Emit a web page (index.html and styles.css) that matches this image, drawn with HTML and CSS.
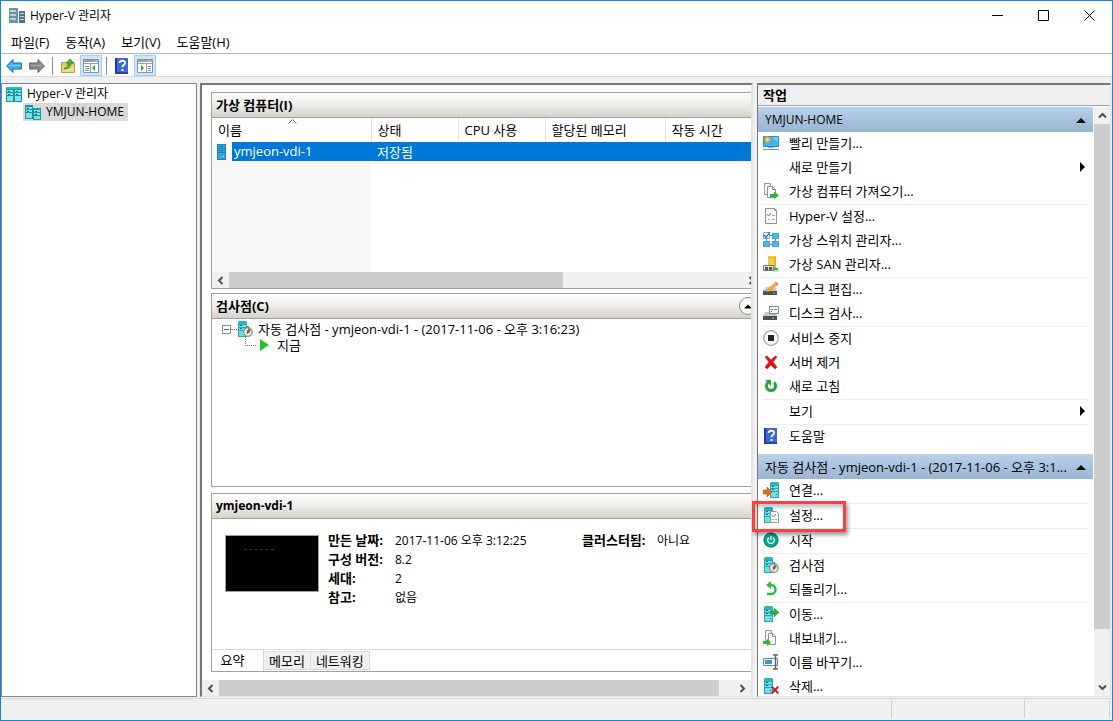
FILE: index.html
```html
<!DOCTYPE html>
<html lang="ko">
<head>
<meta charset="utf-8">
<title>Hyper-V 관리자</title>
<link rel="stylesheet" href="styles.css">
</head>
<body>
<svg class="defs" aria-hidden="true">
  <symbol id="server" viewBox="0 0 16 16">
    <path d="M1 1h9v15H1z" fill="#2aa6ae"/><path d="M1 1l1-1h7l1 1v2H1z" fill="#2bb4bc"/>
    <path d="M2 4h7v2H2zM2 7h7v2H2zM2 10h7v5H2z" fill="#6fdfe3"/>
    <path d="M3 4h2v1H3zM3 7h2v1H3zM7 12h1v1H7z" fill="#0b7780"/>
  </symbol>
  <symbol id="clock" viewBox="0 0 16 16">
    <use href="#server"/><path d="M9 5h3v2H9z" fill="#888"/><circle cx="11" cy="11" r="4.300" fill="#e6e6e6" stroke="#8b8b8b" stroke-width="1.200"/>
    <path d="M11 11V7a4 4 0 0 1 3 3z" fill="#2aa636"/><path d="M10 9l3 2-3 2z" fill="#b52720"/>
  </symbol>
  <symbol id="rack" viewBox="0 0 16 16">
    <path d="M0 1h16v15H0z" fill="#1a98a1"/><path d="M0 1h16v2H0z" fill="#29bcc4"/>
    <path d="M1 4h6v2H1zM1 7h6v2H1zM1 10h6v5H1zM9 4h6v2H9zM9 7h6v2H9zM9 10h6v5H9z" fill="#7ce6e6"/>
    <path d="M2 5h2v1H2zM2 8h2v1H2zM10 5h2v1h-2zM10 8h2v1h-2z" fill="#0b6a74"/>
  </symbol>
  <symbol id="host" viewBox="0 0 16 16">
    <path d="M0 1h8v14H0zM8 4h8v12H8z" fill="#1a98a1"/>
    <path d="M1 3h6v2H1zM1 6h6v2H1zM1 9h6v5H1zM9 6h6v2H9zM9 9h6v2H9zM9 12h6v3H9z" fill="#78e2e5"/>
    <path d="M2 4h2v1H2zM2 7h2v1H2zM10 7h2v1h-2zM10 10h2v1h-2z" fill="#0b6a74"/>
  </symbol>
  <symbol id="app" viewBox="0 0 16 16">
    <path d="M0 0h9v15H0z" fill="#6f9197"/><path d="M1 2h6v2H1zM1 6h6v2H1zM1 10h6v2H1z" fill="#b4d3d3"/>
    <path d="M10 3h6v12h-6z" fill="#4c7a83"/><path d="M11 5h4v1h-4zM11 8h4v1h-4zM11 11h4v1h-4z" fill="#b8dcda"/>
  </symbol>
  <symbol id="vm" viewBox="0 0 10 16"><path d="M0 0h9v16H0z" fill="#1b82b8"/><path d="M1 1h7v3H1zM1 5h7v3H1zM1 9h7v6H1z" fill="#35a9de"/><path d="M2 2h4v1H2zM2 6h4v1H2z" fill="#1672a5"/><path d="M6 12h1v1H6z" fill="#c9effc"/></symbol>
  <symbol id="left" viewBox="0 0 16 16"><path d="M.6 8L7 1.500v3.500h8.400v6H7v3.500z" fill="#43b1ef" stroke="#1767ae"/><path d="M3 7.500h11.500" stroke="#8bd5fa"/></symbol>
  <symbol id="right" viewBox="0 0 16 16"><path d="M15.400 8L9 1.500v3.500H.6v6H9v3.500z" fill="#8b8b8b" stroke="#656565"/><path d="M2 7.500h10" stroke="#aaa"/></symbol>
  <symbol id="folder" viewBox="0 0 16 16"><path d="M1.500 4.500h5l1 1h7v9h-13z" fill="#e3c36e" stroke="#c39c45"/><path d="M2 8h12v6H2z" fill="#f3da92"/><path d="M4 10c3 0 4-2 4-5H6l4-4 4 4h-3c0 4-2 6-7 6z" fill="#3ebd39" stroke="#238426" stroke-width=".6"/></symbol>
  <symbol id="paneL" viewBox="0 0 16 16"><path d="M.5 1.500h15v13H.5z" fill="#fff" stroke="#8b9297"/><path d="M1 2h14v2H1z" fill="#9aa0a4"/><path d="M1 5.500h14M7.500 6v8" stroke="#9ba1a5"/><path d="M2 8.500h4M2 10.500h4M2 12.500h4" stroke="#8b9297"/><path d="M12 7v6l-3-3z" fill="#2fa336"/><path d="M11 3h1M13 3h1" stroke="#fff"/></symbol>
  <symbol id="paneR" viewBox="0 0 16 16"><path d="M.5 1.500h15v13H.5z" fill="#fff" stroke="#8b9297"/><path d="M1 2h14v2H1z" fill="#9aa0a4"/><path d="M1 5.500h14M9.500 6v8" stroke="#9ba1a5"/><path d="M11 8.500h3M11 10.500h3M11 12.500h3" stroke="#6b94bb"/><path d="M4 7v6l3-3z" fill="#2fa336"/><path d="M11 3h1M13 3h1" stroke="#fff"/></symbol>
  <symbol id="help" viewBox="0 0 16 16"><path d="M1 0h13v16H1z" fill="#4167d4"/><path d="M1 0h2v16H1z" fill="#1e3d96"/><path d="M1 14h13v2H1z" fill="#2247a8"/><path d="M5.500 5c0-3 6-3 5.500 0 0 2-2.600 2-2.600 4.300" fill="none" stroke="#fff" stroke-width="1.800"/><path d="M7.500 11h2v2h-2z" fill="#fff"/></symbol>
  <symbol id="monitor" viewBox="0 0 16 16"><path d="M.5 1.500h15v10H.5z" fill="#42b4ee" stroke="#3489bd"/><path d="M9 2h6v5z" fill="#75cef8"/><path d="M5 12h6v1H5z" fill="#9dacb3"/><path d="M0 14.500h16" stroke="#7d929b"/><path d="M4.500 1v7M1 4.500h7M2 2l5 5M7 2L2 7" stroke="#ffad29" stroke-width="1.200"/><circle cx="4.500" cy="4.500" r="1.500" fill="#ffe17b"/></symbol>
  <symbol id="import" viewBox="0 0 16 16"><path d="M1.500.5h6v11h-6z" fill="#f5f5f5" stroke="#999"/><path d="M4.500 3.500h5l3 3v8h-8z" fill="#fff" stroke="#929292"/><path d="M9.500 3.500v3h3" fill="none" stroke="#929292"/><path d="M7 11h4V8.500l5 4-5 3.500v-2H7z" fill="#24b82f"/></symbol>
  <symbol id="export" viewBox="0 0 16 16"><path d="M2.500.5h6v10h-6z" fill="#f5f5f5" stroke="#999"/><path d="M5.500 3.500h4l3 3v8h-7z" fill="#fff" stroke="#929292"/><path d="M9.500 3.500v3h3" fill="none" stroke="#929292"/><path d="M0 11h4V8.500l4 4L4 16v-2H0z" fill="#24b82f"/></symbol>
  <symbol id="checklist" viewBox="0 0 16 16"><path d="M2.500.5h9l2 2v13h-11z" fill="#fbfbfb" stroke="#929292"/><path d="M11.500.5v2h2" fill="none" stroke="#929292"/><path d="M4 6l1.500 2L8 5" fill="none" stroke="#338ace"/><path d="M9 7.500h3M9 11.500h3M5 11.500h2" stroke="#a6a6a6"/></symbol>
  <symbol id="switch" viewBox="0 0 16 16"><path d="M.5.5h6v6h-6z" fill="#fff" stroke="#74a9cb"/><path d="M9.500 1.500h6v5h-6zM.5 9.500h6v5h-6zM9.500 9.500h6v5h-6z" fill="#4eb8f1" stroke="#3d9dd3"/><path d="M7 3.500h2M7 12.500h2M12.500 7v2M3.500 7v2" stroke="#6c8b9e"/><path d="M1 3l2 2.500L7 0" fill="none" stroke="#167cbe" stroke-width="1.300"/></symbol>
  <symbol id="san" viewBox="0 0 16 16"><path d="M5 0h8v12H5z" fill="#f4ce43"/><path d="M5 1q4 2 8 0" fill="none" stroke="#d9b53b"/><path d="M11 2h2v10h-2z" fill="#e2b435"/><path d="M.5 9.500h10v5H.5z" fill="#e2e4e5" stroke="#777"/><path d="M2 11h3v3H2zM6 11h3v3H6z" fill="#555"/><path d="M11 12h4v2h-4z" fill="#29b33a"/><path d="M10 15h6" stroke="#aaa"/></symbol>
  <symbol id="diskedit" viewBox="0 0 16 16"><path d="M3 6h9l2 4H0z" fill="#c5c8ca"/><path d="M0 10h14v4H0z" fill="#4d5052"/><path d="M10 12h2" stroke="#71dd66"/><path d="M4 11l1-3 8-7 2 2-8 7z" fill="#f4b331" stroke="#c98a2e" stroke-width=".5"/><path d="M12 2l1-1 2 2-1 1z" fill="#e07676"/></symbol>
  <symbol id="diskcheck" viewBox="0 0 16 16"><path d="M2 7h10l2 4H0z" fill="#c5c8ca"/><path d="M0 11h14v4H0z" fill="#4d5052"/><path d="M9 13h2" stroke="#71dd66"/><path d="M6.500 1.500h9v7h-9z" fill="#f7f8fa" stroke="#7d8799"/><path d="M8 4.500h2M11 4.500h3M8 6.500h1" stroke="#66758d"/></symbol>
  <symbol id="stop" viewBox="0 0 16 16"><circle cx="8" cy="8" r="7.300" fill="#fff" stroke="#a0a0a0" stroke-width="1.200"/><path d="M5 5h6v6H5z" fill="#242424"/></symbol>
  <symbol id="delete" viewBox="0 0 16 16"><path d="M2 3l2-1 4 4 4-4 2 1-4 5 4 5-2 2-4-4-4 4-2-2 4-5z" fill="#df121a" stroke="#df121a" stroke-width=".6"/></symbol>
  <symbol id="refresh" viewBox="0 0 16 16"><path d="M5 4.500a4.600 4.600 0 1 0 6 0" fill="none" stroke="#26a637" stroke-width="3"/><path d="M2 2h6v6z" fill="#26a637"/></symbol>
  <symbol id="connect" viewBox="0 0 16 16"><use href="#server" x="6"/><path d="M0 8h4V5l5 5-5 5v-3H0z" fill="#ed681c" stroke="#b64b11" stroke-width=".5"/></symbol>
  <symbol id="settings" viewBox="0 0 16 16"><use href="#server"/><path d="M7.500 4.500h6l2 2v9h-8z" fill="#fafafa" stroke="#8f9aa0"/><path d="M9 8l1.500 2L13 7" fill="none" stroke="#338ad2"/><path d="M9 12.500h2M12 12.500h2" stroke="#9babb3"/></symbol>
  <symbol id="power" viewBox="0 0 16 16"><circle cx="8" cy="8" r="7.500" fill="#07a593"/><circle cx="8" cy="8" r="7" fill="none" stroke="#077f73"/><path d="M6 5.500a3.300 3.300 0 1 0 4 0M8 4v4" fill="none" stroke="#fff" stroke-width="1.300"/></symbol>
  <symbol id="revert" viewBox="0 0 16 16"><path d="M5 4h3a4.500 4.500 0 0 1 0 9H4" fill="none" stroke="#2fbb3d" stroke-width="2.400"/><path d="M8 0v8L3 4z" fill="#2fbb3d"/></symbol>
  <symbol id="move" viewBox="0 0 16 16"><use href="#server"/><path d="M7 5h4V2l5 4.500-5 4.500V8H7z" fill="#24b83a" stroke="#12842a" stroke-width=".4"/></symbol>
  <symbol id="rename" viewBox="0 0 16 16"><path d="M.5 4.500h14v7H.5z" fill="#fff" stroke="#78828a"/><path d="M2 6h7v4H2z" fill="#299ae4"/><path d="M10 1h5M12.500 1v14M10 15h5" stroke="#5e666c" stroke-width="1.500"/></symbol>
  <symbol id="remove" viewBox="0 0 16 16"><use href="#server"/><path d="M8 9l1.500-1 2.500 2.500L14.500 8 16 9l-2.500 3L16 15l-1.500 1-2.500-2.500L9.500 16 8 15l2.500-3z" fill="#d61424"/></symbol>
  <symbol id="chev" viewBox="0 0 9 9"><path d="M1 6.500L4.500 3 8 6.500" fill="none" stroke="#505050" stroke-width="2"/></symbol>
  <symbol id="tri" viewBox="0 0 10 10"><path d="M0 8l5-5 5 5z"/></symbol>
</svg>

<div class="window">
  <header class="titlebar">
    <svg class="icon"><use href="#app"/></svg><h1>Hyper-V 관리자</h1>
    <div class="caption-buttons">
      <button aria-label="최소화"><svg viewBox="0 0 11 11"><path d="M0 5.500h11"/></svg></button>
      <button aria-label="최대화"><svg viewBox="0 0 11 11"><path d="M.5.5h10v10H.5z"/></svg></button>
      <button aria-label="닫기"><svg viewBox="0 0 11 11"><path d="M.5.5l10 10M10.500.5l-10 10"/></svg></button>
    </div>
  </header>
  <nav class="menubar"><button>파일(F)</button><button>동작(A)</button><button>보기(V)</button><button>도움말(H)</button></nav>
  <div class="toolbar">
    <button aria-label="뒤로"><svg class="icon"><use href="#left"/></svg></button>
    <button aria-label="앞으로"><svg class="icon"><use href="#right"/></svg></button>
    <span class="divider"></span>
    <button aria-label="위로"><svg class="icon"><use href="#folder"/></svg></button>
    <button class="on" aria-label="콘솔 트리"><svg class="icon"><use href="#paneL"/></svg></button>
    <span class="divider"></span>
    <button aria-label="도움말"><svg class="icon"><use href="#help"/></svg></button>
    <button class="on" aria-label="작업 창"><svg class="icon"><use href="#paneR"/></svg></button>
  </div>

  <main class="workspace">
    <nav class="tree">
      <ul>
        <li><button><svg class="icon"><use href="#rack"/></svg><span>Hyper-V 관리자</span></button>
          <ul><li><button class="current"><svg class="icon"><use href="#host"/></svg><span>YMJUN-HOME</span></button></li></ul>
        </li>
      </ul>
    </nav>

    <section class="center sunken">
      <div class="panels">
        <section class="panel vms">
          <h2>가상 컴퓨터(I)</h2>
          <div class="grid">
            <table>
              <colgroup><col class="c-name"><col class="c-state"><col class="c-state"><col class="c-mem"><col></colgroup>
              <thead><tr><th><svg class="sort" viewBox="0 0 9 5"><path d="M.5 4.500l4-4 4 4" fill="none" stroke="#777"/></svg>이름</th><th>상태</th><th>CPU 사용</th><th>할당된 메모리</th><th>작동 시간</th></tr></thead>
              <tbody><tr><td><div class="vmname"><svg><use href="#vm"/></svg><span>ymjeon-vdi-1</span></div></td><td>저장됨</td><td></td><td></td><td></td></tr></tbody>
            </table>
            <div class="sorted"></div>
          </div>
          <div class="hscroll"><button aria-label="왼쪽"><svg class="west"><use href="#chev"/></svg></button><div class="track"><div class="thumb vm-thumb"></div></div><button aria-label="오른쪽"><svg class="east"><use href="#chev"/></svg></button></div>
        </section>

        <section class="panel checkpoints">
          <h2>검사점(C)<button class="collapse" aria-label="접기"><svg><use href="#tri"/></svg></button></h2>
          <ul class="cptree">
            <li><button class="toggle" aria-label="축소"></button><span class="dots"></span><svg class="icon"><use href="#clock"/></svg><span>자동 검사점 - ymjeon-vdi-1 - (2017-11-06 - 오후 3:16:23)</span></li>
            <li class="child"><span class="elbow"></span><svg class="play" viewBox="0 0 9 12"><path d="M0 0l9 6-9 6z" fill="#25c22a"/></svg><span>지금</span></li>
          </ul>
        </section>

        <section class="panel details">
          <h2>ymjeon-vdi-1</h2>
          <div class="summary">
            <div class="preview"><span></span></div>
            <dl><dt>만든 날짜:</dt><dd>2017-11-06 오후 3:12:25</dd><dt>구성 버전:</dt><dd>8.2</dd><dt>세대:</dt><dd>2</dd><dt>참고:</dt><dd>없음</dd></dl>
            <dl class="cluster"><dt>클러스터됨:</dt><dd>아니요</dd></dl>
          </div>
          <div class="tabs"><button class="active">요약</button><button>메모리</button><button>네트워킹</button></div>
        </section>
      </div>
      <div class="hscroll"><button aria-label="왼쪽"><svg class="west"><use href="#chev"/></svg></button><div class="track"><div class="thumb main-thumb"></div></div><button aria-label="오른쪽"><svg class="east"><use href="#chev"/></svg></button></div>
    </section>

    <aside class="actions sunken">
      <h2>작업</h2>
      <div class="actions-body">
        <div class="action-groups">
          <button class="group latin"><span>YMJUN-HOME</span><svg><use href="#tri"/></svg></button>
          <ul>
            <li><button><svg class="icon"><use href="#monitor"/></svg>빨리 만들기...</button></li>
            <li><button><span class="icon"></span>새로 만들기<svg class="sub"><use href="#tri"/></svg></button></li>
            <li><button><svg class="icon"><use href="#import"/></svg>가상 컴퓨터 가져오기...</button></li>
            <li class="sep"><button><svg class="icon"><use href="#checklist"/></svg>Hyper-V 설정...</button></li>
            <li><button><svg class="icon"><use href="#switch"/></svg>가상 스위치 관리자...</button></li>
            <li><button><svg class="icon"><use href="#san"/></svg>가상 SAN 관리자...</button></li>
            <li class="sep"><button><svg class="icon"><use href="#diskedit"/></svg>디스크 편집...</button></li>
            <li><button><svg class="icon"><use href="#diskcheck"/></svg>디스크 검사...</button></li>
            <li class="sep"><button><svg class="icon"><use href="#stop"/></svg>서비스 중지</button></li>
            <li><button><svg class="icon"><use href="#delete"/></svg>서버 제거</button></li>
            <li><button><svg class="icon"><use href="#refresh"/></svg>새로 고침</button></li>
            <li class="sep"><button><span class="icon"></span>보기<svg class="sub"><use href="#tri"/></svg></button></li>
            <li class="sep"><button><svg class="icon"><use href="#help"/></svg>도움말</button></li>
          </ul>
          <button class="group"><span>자동 검사점 - ymjeon-vdi-1 - (2017-11-06 - 오후 3:1...</span><svg><use href="#tri"/></svg></button>
          <ul>
            <li><button><svg class="icon"><use href="#connect"/></svg>연결...</button></li>
            <li class="sep marked"><button><svg class="icon"><use href="#settings"/></svg>설정...</button></li>
            <li class="sep"><button><svg class="icon"><use href="#power"/></svg>시작</button></li>
            <li class="sep"><button><svg class="icon"><use href="#clock"/></svg>검사점</button></li>
            <li><button><svg class="icon"><use href="#revert"/></svg>되돌리기...</button></li>
            <li class="sep"><button><svg class="icon"><use href="#move"/></svg>이동...</button></li>
            <li><button><svg class="icon"><use href="#export"/></svg>내보내기...</button></li>
            <li><button><svg class="icon"><use href="#rename"/></svg>이름 바꾸기...</button></li>
            <li><button><svg class="icon"><use href="#remove"/></svg>삭제...</button></li>
          </ul>
        </div>
        <div class="vscroll"><button aria-label="위"><svg><use href="#chev"/></svg></button><div class="track"><div class="thumb"></div></div><button aria-label="아래"><svg class="south"><use href="#chev"/></svg></button></div>
      </div>
    </aside>
  </main>
  <footer class="statusbar"><span></span><span></span><span></span></footer>
</div>
</body>
</html>
```
FILE: styles.css
```css
*, *::after { box-sizing: border-box; }
body {
  margin: 0;
  font: 13px/16px "Open Sans", "Noto Sans CJK KR", sans-serif;
  color: #000;
}
button {
  padding: 0;
  border: 0;
  background: none;
  font: inherit;
  color: inherit;
}
h1, h2, ul, dl, dd { margin: 0; padding: 0; }
ul { list-style: none; }
svg { display: block; flex: none; }
.defs { position: absolute; width: 0; height: 0; }
.icon { width: 16px; height: 16px; flex: none; }

.window {
  display: flex;
  flex-direction: column;
  height: 100vh;
  border: 1px solid #1883d7;
  background: #f0f0f0;
  overflow: hidden;
}
.titlebar {
  display: flex;
  align-items: center;
  gap: 5px;
  height: 29px;
  padding-left: 8px;
  background: #fff;
}
.titlebar h1 { flex: 1; font-size: 12px; font-weight: 400; }
.caption-buttons { display: flex; align-self: stretch; }
.caption-buttons button { display: grid; place-items: center; width: 46px; }
.caption-buttons svg { width: 11px; height: 11px; fill: none; stroke: #000; }
.menubar {
  display: flex;
  gap: 16px;
  height: 24px;
  padding-left: 10px;
  background: #fff;
  border-bottom: 1px solid #b4b7bd;
}
.toolbar {
  display: flex;
  align-items: center;
  gap: 1px;
  height: 23px;
  padding: 1px 0 0 2px;
  background: #fff;
  border-bottom: 1px solid #dcdcdc;
}
.toolbar button { display: grid; place-items: center; width: 22px; height: 21px; }
.toolbar .on { background: #cce8ff; border: 1px solid #99d1ff; }
.divider { width: 1px; height: 18px; margin: 0 3px; background: #8d8d8d; }

.workspace {
  flex: 1;
  min-height: 0;
  display: grid;
  grid-template-columns: 196px minmax(0, 1fr) 354px;
  gap: 3px;
  padding: 6px 1px 0 0;
}
.tree { border: 1px solid #828790; background: #fff; padding-top: 1px; margin-bottom: 1px; font-size: 12px; }
.tree ul ul { padding-left: 21px; }
.tree button { display: flex; align-items: center; gap: 5px; height: 18px; padding: 0 4px; }
.tree .current { background: #d9d9d9; padding: 0 4px 0 2px; }
.latin { font-size: 12px; }

.sunken {
  display: flex;
  flex-direction: column;
  min-width: 0;
  min-height: 0;
  margin-bottom: 1px;
  border: 2px solid #777;
  border-right-color: #e3e3e3;
  border-bottom: 1px solid #e3e3e3;
  background: #fff;
}
.center { margin-right: 1px; overflow: hidden; }
.panels {
  flex: 1;
  min-height: 0;
  display: flex;
  flex-direction: column;
  gap: 4px;
  padding: 7px 0 8px 9px;
  margin-right: -10px;
}
.panel { display: flex; flex-direction: column; border: 1px solid #a0a0a0; }
.panel h2 {
  display: flex;
  align-items: center;
  justify-content: space-between;
  height: 25px;
  flex: none;
  padding: 0 3px 0 4px;
  border-bottom: 1px solid #a0a0a0;
  background: linear-gradient(#fff, #f0efec 45%, #d5d2ca);
  font-size: 13px;
  font-weight: 700;
}
.panel.details h2 { font-size: 12px; }
.vms { height: 197px; }
.grid { position: relative; flex: 1; min-height: 0; }
table { position: relative; z-index: 1; width: 100%; table-layout: fixed; border-collapse: collapse; }
.c-name { width: 159px; }
.c-state { width: 87px; }
.c-mem { width: 120px; }
th { height: 24px; padding: 0 6px; text-align: left; font-weight: 400; background: #fff; border-right: 1px solid #e5e5e5; }
.sort { position: absolute; top: 1px; left: 76px; width: 9px; height: 5px; }
td { height: 19px; padding: 0 6px; background: #0078d7; color: #fff; }
td:first-child { padding: 0; background: none; }
.vmname { display: flex; align-items: center; gap: 5px; padding-left: 5px; height: 19px; }
.vmname svg { width: 10px; height: 16px; }
.vmname span { flex: 1; padding-left: 2px; line-height: 19px; background: #0078d7; }
.sorted { position: absolute; top: 24px; bottom: 0; left: 0; width: 159px; background: #f7f7f7; }
.hscroll { display: flex; flex: none; height: 16px; background: #f0f0f0; }
.hscroll button { display: grid; place-items: center; width: 17px; }
.hscroll svg, .vscroll svg { width: 9px; height: 9px; }
.west { transform: rotate(-90deg); }
.east { transform: rotate(90deg); }
.south { transform: rotate(180deg); }
.track { flex: 1; }
.thumb { height: 100%; background: #cdcdcd; }
.vm-thumb { width: 65%; }
.main-thumb { width: 97%; }

.checkpoints { flex: 1; min-height: 0; }
.collapse { display: grid; place-items: center; width: 18px; height: 18px; border: 1px solid #8a8a8a; border-radius: 50%; background: #fff; }
.collapse svg { width: 8px; height: 8px; }
.cptree { padding: 2px 0 0 10px; }
.cptree li { display: flex; align-items: center; height: 16px; }
.toggle { width: 9px; height: 9px; border: 1px solid #919191; background: linear-gradient(#3961b5, #3961b5) center / 5px 1px no-repeat, #fff; }
.dots { width: 6px; border-top: 1px dotted #808080; }
.cptree .icon { margin-right: 5px; }
.cptree .child { padding-left: 23px; }
.elbow { align-self: flex-start; width: 11px; height: 9px; border-left: 1px dotted #808080; border-bottom: 1px dotted #808080; }
.play { width: 9px; height: 12px; margin: 0 8px 0 4px; }

.details { height: 179px; margin-top: 2px; }
.summary { flex: 1; display: flex; padding: 12px 0 0 13px; gap: 9px; font-size: 12px; line-height: 19px; }
.preview { width: 94px; height: 57px; margin-top: 4px; padding: 13px 0 0 18px; border: 1px solid #a0a0a0; background: #000; }
.preview span { display: block; width: 30px; border-top: 1px dashed #333; }
dl { display: grid; grid-template-columns: 67px 187px; align-content: start; }
.cluster { margin-left: -9px; grid-template-columns: 75px auto; }
dt { font-size: 13px; font-weight: 700; white-space: nowrap; }
.tabs { display: flex; height: 22px; border-top: 1px solid #d9d9d9; }
.tabs button { height: 19px; margin-top: 1px; padding: 0 5px; background: #f0f0f0; border: 1px solid #d9d9d9; border-left: 0; line-height: 14px; }
.tabs .active { width: 52px; height: 21px; margin-top: 0; padding: 0 18px 0 8px; background: #fff; border-width: 0 1px 0 0; line-height: 19px; white-space: nowrap; }

.actions { border-left-width: 1px; border-right-width: 1px; }
.actions h2 { height: 21px; flex: none; padding-left: 5px; border-bottom: 1px solid #a0a0a0; background: #f0f0f0; font-size: 13px; line-height: 20px; }
.actions-body { flex: 1; min-height: 0; display: flex; gap: 1px; padding-top: 1px; clip-path: inset(0 0 0 -12px); }
.action-groups { flex: 1; min-width: 0; }
.group { display: flex; align-items: center; gap: 4px; width: 100%; height: 25px; padding: 0 7px; background: linear-gradient(#b9d1ea, #99b4d1); text-align: left; }
.group span { flex: 1; min-width: 0; white-space: nowrap; }
.group svg, .sub { width: 10px; height: 10px; }
.action-groups ul { padding: 0 5px; }
.action-groups ul + .group { margin-top: 5px; }
.action-groups li { position: relative; }
.action-groups li.sep { border-top: 1px solid #ededed; }
.action-groups li button { display: flex; align-items: center; width: 100%; height: 24px; padding-bottom: 2px; text-align: left; }
.action-groups li .icon { margin-right: 10px; }
.sub { margin-left: auto; transform: rotate(90deg); }
.marked::after { content: ""; position: absolute; z-index: 2; top: -3px; left: -11px; width: 94px; height: 31px; border: 3px solid #f54343; box-shadow: 2px 3px 4px #0006, inset 1px 3px 4px #0004; }
.vscroll { display: flex; flex-direction: column; width: 16px; background: #f0f0f0; }
.vscroll button { display: grid; place-items: center; height: 17px; }
.vscroll .thumb { height: 91%; }

.statusbar { display: grid; grid-template-columns: 1fr 133px 85px; height: 22px; padding: 1px 2px 2px 0; border-top: 1px solid #d7d7d7; }
.statusbar span { border-right: 1px solid #d0d0d0; }
```
